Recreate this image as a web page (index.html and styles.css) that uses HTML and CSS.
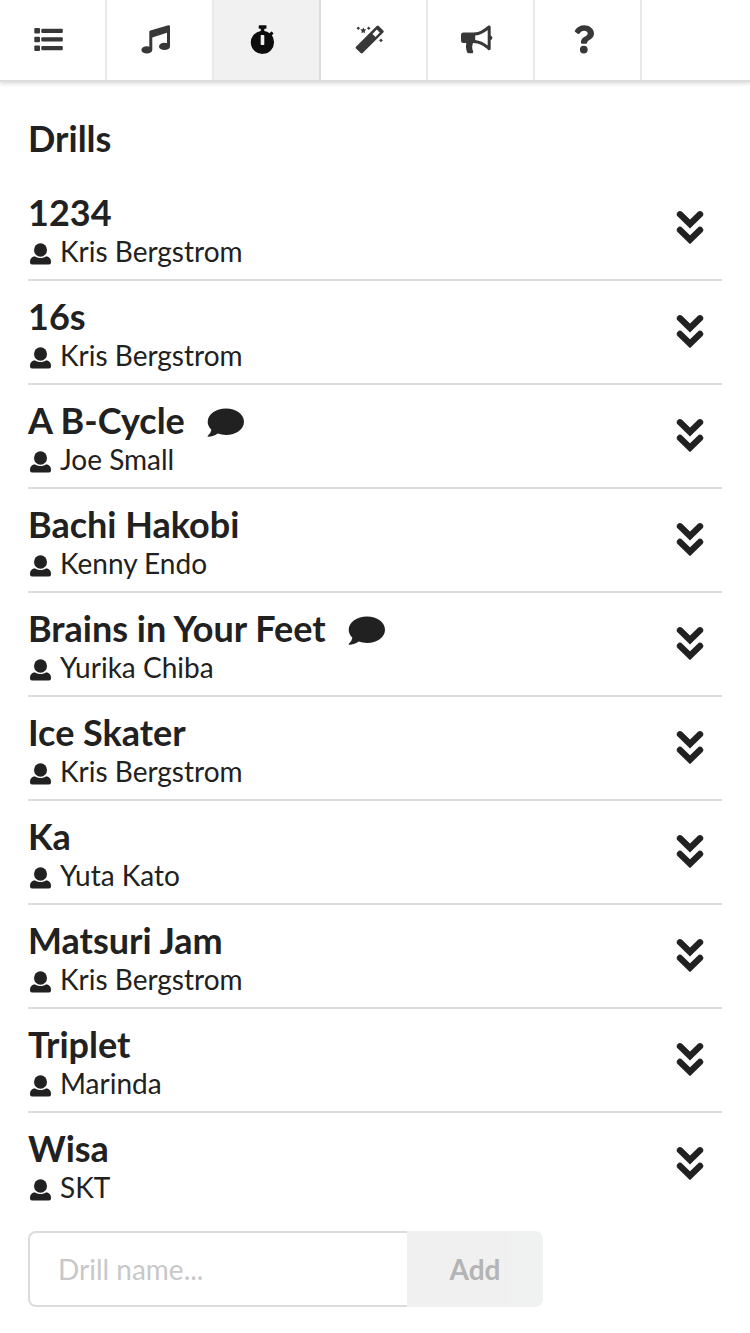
FILE: index.html
```html
<!DOCTYPE html>
<html lang="en">
<head>
<meta charset="utf-8">
<meta name="viewport" content="width=device-width, initial-scale=1">
<title>Drills</title>
<link rel="stylesheet" href="styles.css">
</head>
<body>
<svg class="sprite" aria-hidden="true">
  <symbol id="user" viewBox="0 0 22 22"><ellipse cx="10.500" cy="7" rx="6.500" ry="6.700"/><path d="M4.500 13.300C8 15.700 13 15.700 16.500 13.300C19.500 14 21 16 21 18.500V19.500Q21 21.500 19 21.500H2Q0 21.500 0 19.500V18.500C0 16 1.500 14 4.500 13.300Z"/></symbol>
  <symbol id="comment" viewBox="0 0 38 30"><path d="M19 .5C29 .5 37 6.300 37 13.700S29 27 19 27Q14.500 27 10.800 25.600Q7 28.700 .8 28.800Q.3 28.300 .8 27.800Q4 25 4.400 21.800Q.7 18 .7 13.700C.7 6.300 9 .5 19 .5Z"/></symbol>
  <symbol id="expand" viewBox="0 0 28 34"><path d="M4 4.300L14 14L24 4.300M4 20L14 29.700L24 20" fill="none" stroke="currentColor" stroke-width="6.400" stroke-linecap="round"/></symbol>
</svg>

<nav class="menu" aria-label="Main">
  <a class="menu-item" href="#list" aria-label="List"><svg class="menu-icon" viewBox="0 0 36 36"><rect x="4.300" y="6" width="5.700" height="5.600" rx="1"/><rect x="4.300" y="14.800" width="5.700" height="5.400" rx="1"/><rect x="4.300" y="23.500" width="5.700" height="5.500" rx="1"/><rect x="11.300" y="6.700" width="21.500" height="4.200" rx="1"/><rect x="11.300" y="15.300" width="21.500" height="4.200" rx="1"/><rect x="11.300" y="24.100" width="21.500" height="4.200" rx="1"/></svg></a>
  <a class="menu-item" href="#songs" aria-label="Songs"><svg class="menu-icon" viewBox="0 0 36 36"><path d="M12.300 9.800Q12.300 8.800 13.300 8.400L31.300 3.200Q33 2.900 33 4.500V24.500H30V10.700L15.300 15.500V28H12.300Z"/><ellipse cx="9.800" cy="27.900" rx="5.400" ry="3.600"/><ellipse cx="27.500" cy="24.400" rx="5.500" ry="3.600"/></svg></a>
  <a class="menu-item active" href="#drills" aria-label="Drills" aria-current="page"><svg class="menu-icon" viewBox="0 0 36 36"><path fill-rule="evenodd" d="M15.400 3.300H21.800Q22.500 3.300 22.500 4V6Q22.500 6.700 21.800 6.700H20.300V9Q23.300 9.500 25.600 11.200L27 9.700Q27.500 9.200 28 9.700L29.200 11Q29.600 11.500 29.100 12L27.900 13.300Q30 16.200 30 20.100A11.600 11.500 0 1 1 16.800 9V6.700H15.400Q14.700 6.700 14.700 6V4Q14.700 3.300 15.400 3.300ZM17.300 13Q16.700 13 16.700 13.700V22.300Q16.700 23 17.300 23H19.700Q20.300 23 20.300 22.300V13.700Q20.300 13 19.700 13Z"/></svg></a>
  <a class="menu-item" href="#tools" aria-label="Tools"><svg class="menu-icon" viewBox="0 0 36 36"><path fill-rule="evenodd" d="M5 24.700L25.700 4Q26.700 3 27.700 4L32.300 8.600Q33.300 9.600 32.300 10.600L11.700 31Q10.700 31.900 9.700 31L5 26.500Q4.100 25.600 5 24.700ZM25.800 7.600L21.500 12L24.500 15L28.800 10.600Z"/><path d="M12.300 5.400L13.200 7.300L15.300 7.600L13.700 9.100L14.100 11.300L12.300 10.200L10.400 11.300L10.800 9.100L9.300 7.600L11.400 7.300ZM7.300 4.500L8.200 5.400L9.200 6.200L8.200 7.100L7.300 8.100L6.400 7.100L5.400 6.200L6.400 5.400ZM17.700 4.500L18.600 5.400L19.600 6.200L18.600 7.100L17.700 8.100L16.800 7.100L15.800 6.200L16.800 5.400ZM30 16.500L30.900 17.500L31.900 18.400L30.900 19.300L30 20.300L29.100 19.300L28.100 18.400L29.100 17.500Z"/></svg></a>
  <a class="menu-item" href="#news" aria-label="News"><svg class="menu-icon" viewBox="0 0 36 36"><path fill-rule="evenodd" d="M5.500 10.500H16C21.500 10.500 26 7.200 30 3.800C31.200 2.900 32.700 3.600 32.700 5V13.500Q34.400 14.200 34.400 15.800T32.700 18.100V26.500C32.700 28.200 31.200 28.700 30 27.700C26 24.400 21.500 21.100 15 21.100C13.900 24.500 13.900 26.500 15.100 29.200Q15.700 31.300 13.500 31.300H10.700Q9.500 31.300 9 30C7.900 27 7.700 24.500 8.300 21.100H5.500Q3 21.100 3 18.600V13Q3 10.500 5.500 10.500ZM17.200 13.600V17.900Q24 18.800 29.700 23.600V8Q24 12.700 17.200 13.600Z"/></svg></a>
  <a class="menu-item" href="#help" aria-label="Help"><svg class="menu-icon" viewBox="0 0 36 36"><path d="M9.900 8.600C12 5.300 15 3.300 19.300 3.300C24 3.300 29 6.500 29 11.500C29 17.300 22.300 17.800 22.300 20.300Q22.300 21.800 20.900 21.800H17.300Q15.900 21.800 15.900 20.300C15.900 14.700 22.700 14.600 22.700 11.500C22.700 9.600 21 8.700 19.200 8.700C16.800 8.700 15.700 10 14.500 11.500Q13.700 12.400 12.700 11.700L10.300 10Q9.400 9.400 9.900 8.600Z"/><circle cx="18.800" cy="27.600" r="3.900"/></svg></a>
</nav>

<main class="page">
  <h1 class="page-title">Drills</h1>
  <ul class="drills">
    <li class="drill"><div class="info"><h2 class="name">1234</h2><p class="author"><svg class="user"><use href="#user"/></svg>Kris Bergstrom</p></div><button class="toggle" type="button" aria-label="Expand 1234"><svg class="chevrons"><use href="#expand"/></svg></button></li>
    <li class="drill"><div class="info"><h2 class="name">16s</h2><p class="author"><svg class="user"><use href="#user"/></svg>Kris Bergstrom</p></div><button class="toggle" type="button" aria-label="Expand 16s"><svg class="chevrons"><use href="#expand"/></svg></button></li>
    <li class="drill"><div class="info"><h2 class="name">A B-Cycle<svg class="comment"><use href="#comment"/></svg></h2><p class="author"><svg class="user"><use href="#user"/></svg>Joe Small</p></div><button class="toggle" type="button" aria-label="Expand A B-Cycle"><svg class="chevrons"><use href="#expand"/></svg></button></li>
    <li class="drill"><div class="info"><h2 class="name">Bachi Hakobi</h2><p class="author"><svg class="user"><use href="#user"/></svg>Kenny Endo</p></div><button class="toggle" type="button" aria-label="Expand Bachi Hakobi"><svg class="chevrons"><use href="#expand"/></svg></button></li>
    <li class="drill"><div class="info"><h2 class="name">Brains in Your Feet<svg class="comment"><use href="#comment"/></svg></h2><p class="author"><svg class="user"><use href="#user"/></svg>Yurika Chiba</p></div><button class="toggle" type="button" aria-label="Expand Brains in Your Feet"><svg class="chevrons"><use href="#expand"/></svg></button></li>
    <li class="drill"><div class="info"><h2 class="name">Ice Skater</h2><p class="author"><svg class="user"><use href="#user"/></svg>Kris Bergstrom</p></div><button class="toggle" type="button" aria-label="Expand Ice Skater"><svg class="chevrons"><use href="#expand"/></svg></button></li>
    <li class="drill"><div class="info"><h2 class="name">Ka</h2><p class="author"><svg class="user"><use href="#user"/></svg>Yuta Kato</p></div><button class="toggle" type="button" aria-label="Expand Ka"><svg class="chevrons"><use href="#expand"/></svg></button></li>
    <li class="drill"><div class="info"><h2 class="name">Matsuri Jam</h2><p class="author"><svg class="user"><use href="#user"/></svg>Kris Bergstrom</p></div><button class="toggle" type="button" aria-label="Expand Matsuri Jam"><svg class="chevrons"><use href="#expand"/></svg></button></li>
    <li class="drill"><div class="info"><h2 class="name">Triplet</h2><p class="author"><svg class="user"><use href="#user"/></svg>Marinda</p></div><button class="toggle" type="button" aria-label="Expand Triplet"><svg class="chevrons"><use href="#expand"/></svg></button></li>
    <li class="drill"><div class="info"><h2 class="name">Wisa</h2><p class="author"><svg class="user"><use href="#user"/></svg>SKT</p></div><button class="toggle" type="button" aria-label="Expand Wisa"><svg class="chevrons"><use href="#expand"/></svg></button></li>
  </ul>
  <form class="add-form">
    <input class="add-input" type="text" placeholder="Drill name..." aria-label="Drill name">
    <button class="add-button" type="submit" disabled>Add</button>
  </form>
</main>
</body>
</html>
```
FILE: styles.css
```css
* {
  box-sizing: border-box;
}

body {
  margin: 0;
  background: #fff;
  color: #212121;
  font-family: Lato, "Liberation Sans", sans-serif;
  font-size: 28px;
  line-height: 38px;
}

svg {
  display: block;
  flex: none;
  fill: currentColor;
}

.sprite {
  display: none;
}

.menu {
  display: flex;
  border-bottom: 2px solid #dcdcdc;
  box-shadow: 0 2px 4px rgba(34, 36, 38, 0.15);
}

.menu-item {
  display: flex;
  align-items: center;
  height: 80px;
  padding: 0 39px 0 30px;
  border-right: 2px solid #e8e8e8;
  color: #383838;
}

.menu-item.active {
  background: #f1f1f1;
  border-right-color: #dcdcdc;
  color: #0d0d0d;
}

.menu-icon {
  width: 36px;
  height: 36px;
}

.page {
  padding: 33px 28px 26px;
}

.page-title,
.name {
  margin: 0;
  font-size: 36px;
  font-weight: 700;
}

.page-title {
  line-height: 46px;
}

.drills {
  margin: 0;
  padding: 16px 0 0;
  list-style: none;
}

.drill {
  display: flex;
  align-items: center;
  justify-content: space-between;
  padding: 15px 18px 9px 0;
  border-bottom: 2px solid #dcdcdc;
}

.drill:last-child {
  border-bottom: 0;
}

.name {
  display: flex;
  align-items: center;
  gap: 22px;
  line-height: 40px;
}

.comment {
  width: 38px;
  height: 30px;
  margin-top: 6px;
}

.author {
  display: flex;
  align-items: center;
  gap: 8px;
  margin: 0;
  padding-left: 2px;
}

.user {
  width: 22px;
  height: 22px;
  margin-top: 6px;
}

.toggle {
  padding: 0 0 8px;
  border: 0;
  background: none;
  color: inherit;
}

.chevrons {
  width: 28px;
  height: 34px;
}

.add-form {
  display: flex;
  padding-top: 16px;
}

.add-input {
  flex: 0 1 379px;
  min-width: 0;
  height: 76px;
  padding: 0 28px;
  border: 2px solid #dcdcdc;
  border-right: 0;
  border-radius: 8px 0 0 8px;
  background: #fff;
  font: inherit;
}

.add-input::placeholder {
  color: #c8c8c8;
  opacity: 1;
}

.add-button {
  flex: none;
  width: 136px;
  border: 0;
  border-radius: 0 8px 8px 0;
  background: linear-gradient(to right, #f0f0f0 75%, #f0f2f1 75%);
  color: #b4b4b4;
  font: inherit;
  font-weight: 700;
}
```
